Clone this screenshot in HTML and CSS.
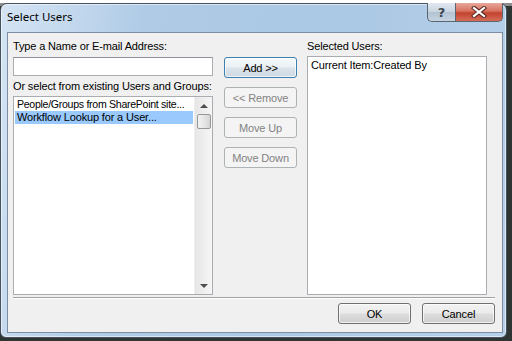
FILE: index.html
```html
<!DOCTYPE html>
<html lang="en">
  <head>
    <meta charset="UTF-8" />
    <title>Select Users</title>
    <link rel="stylesheet" href="styles.css">
  </head>
  <body>
    <div class="desktop">
      <div class="window">
        <div class="titlebar">
          <span class="title">Select Users</span>
          <div class="caption-buttons">
            <span class="cap-btn help">?</span>
            <span class="cap-btn close">
              <svg width="16" height="12" viewBox="0 0 16 12">
                <path d="M3 2 L13 10 M13 2 L3 10" stroke="#5a2a22" stroke-width="4.2" stroke-linecap="square" />
                <path d="M3 2 L13 10 M13 2 L3 10" stroke="#ffffff" stroke-width="2.2" stroke-linecap="square" />
              </svg>
            </span>
          </div>
        </div>

        <div class="client">
          <div class="columns">
            <div class="col left-col">
              <label>Type a Name or E-mail Address:</label>
              <input class="name-input" type="text" />
              <label class="second-label">Or select from existing Users and Groups:</label>
              <div class="listbox source-list">
                <ul class="items">
                  <li class="tight">People/Groups from SharePoint site...</li>
                  <li class="selected">Workflow Lookup for a User...</li>
                </ul>
                <div class="scrollbar">
                  <span class="arrow"><span class="tri up"></span></span>
                  <span class="thumb"></span>
                  <span class="track"></span>
                  <span class="arrow"><span class="tri down"></span></span>
                </div>
              </div>
            </div>

            <div class="col middle-col">
              <button class="btn default">Add &gt;&gt;</button>
              <button class="btn" disabled>&lt;&lt; Remove</button>
              <button class="btn" disabled>Move Up</button>
              <button class="btn" disabled>Move Down</button>
            </div>

            <div class="col right-col">
              <label>Selected Users:</label>
              <div class="listbox target-list">
                <ul class="items">
                  <li>Current Item:Created By</li>
                </ul>
              </div>
            </div>
          </div>

          <div class="separator"></div>

          <div class="footer">
            <button class="btn">OK</button>
            <button class="btn">Cancel</button>
          </div>
        </div>
      </div>
    </div>
  </body>
</html>
```

FILE: styles.css
```css
body {
  margin: 0;
  background-color: #ffffff;
  font-family: "Liberation Sans", Arial, sans-serif;
  font-size: 11px;
  letter-spacing: -0.15px;
  color: #000000;
}
.desktop {
  width: 512px;
  height: 338px;
  background: linear-gradient(to bottom, #8d8d8d 0, #8d8d8d 3px, #2f3532 3px);
}
.window {
  box-sizing: border-box;
  width: 507px;
  height: 335px;
  margin-top: 3px;
  border: 1px solid #46525e;
  border-radius: 7px 7px 6px 6px;
  background: linear-gradient(100deg, #d4e4f4 0%, #c2d7ed 14%, #afcbe6 26%, #abc8e4 60%, #b6d0e9 100%);
  box-shadow: inset 0 0 0 1px rgba(255, 255, 255, 0.55);
}
.titlebar {
  display: flex;
  align-items: flex-start;
  height: 28px;
}
.title {
  font-family: "Noto Sans", "Open Sans", sans-serif;
  font-size: 11.5px;
  letter-spacing: 0;
  line-height: 16px;
  padding: 5px 0 0 6px;
  color: #000000;
}
.caption-buttons {
  display: flex;
  margin: -1px 3px 0 auto;
}
.cap-btn {
  display: flex;
  align-items: center;
  justify-content: center;
  height: 19px;
  box-sizing: border-box;
  border: 1px solid #5c6670;
  border-top: none;
}
.help {
  width: 28px;
  border-radius: 0 0 0 5px;
  border-right: none;
  background: linear-gradient(to bottom, #e1e9f1 0%, #c9d5e1 48%, #b3c3d3 52%, #c6d4e2 100%);
  font-family: "DejaVu Sans", sans-serif;
  font-weight: bold;
  font-size: 13px;
  color: #3c4650;
}
.close {
  width: 48px;
  border-radius: 0 0 5px 0;
  background: linear-gradient(to bottom, #e8a89c 0%, #d7715f 45%, #c2432d 55%, #d66d58 100%);
}
.client {
  box-sizing: border-box;
  width: 496px;
  height: 301px;
  margin-left: 6px;
  border: 1px solid #7d8ea2;
  background-color: #f0f0f0;
  padding: 7px 0 0 5px;
}
.columns {
  display: flex;
  align-items: flex-start;
}
.col {
  display: flex;
  flex-direction: column;
}
label {
  display: block;
  line-height: 13px;
  white-space: nowrap;
}
.left-col {
  width: 200px;
}
.name-input {
  box-sizing: border-box;
  width: 200px;
  height: 19px;
  margin: 4px 0 0 0;
  border: 1px solid #abadb3;
  border-top-color: #8e9299;
  background-color: #ffffff;
}
.second-label {
  margin-top: 4px;
}
.listbox {
  box-sizing: border-box;
  margin-top: 3px;
  border: 1px solid #a9adb2;
  background-color: #ffffff;
  display: flex;
}
.source-list {
  width: 200px;
  height: 199px;
}
.target-list {
  width: 180px;
  height: 239px;
}
.items {
  list-style: none;
  margin: 0;
  padding: 1px 1px 0 1px;
  flex: 1;
  min-width: 0;
}
.items li {
  line-height: 13px;
  padding-left: 2px;
  white-space: nowrap;
  overflow: hidden;
}
.items li.tight {
  font-size: 10.6px;
  letter-spacing: -0.3px;
}
.items li.selected {
  background-color: #99c9fd;
}
.target-list .items {
  padding-top: 2px;
}
.scrollbar {
  width: 17px;
  display: flex;
  flex-direction: column;
  align-items: center;
  background: linear-gradient(to right, #e6e6e6, #f6f6f6);
  border-left: 1px solid #eeeeee;
}
.arrow {
  width: 17px;
  height: 17px;
  display: flex;
  align-items: center;
  justify-content: center;
}
.tri {
  width: 0;
  height: 0;
  border-left: 4px solid transparent;
  border-right: 4px solid transparent;
}
.tri.up {
  border-bottom: 4px solid #4d4d4d;
}
.tri.down {
  border-top: 4px solid #4d4d4d;
}
.thumb {
  box-sizing: border-box;
  width: 14px;
  height: 15px;
  border: 1px solid #979797;
  border-radius: 2px;
  background: linear-gradient(to right, #f3f3f3, #e6e6e6 50%, #d4d4d4);
}
.track {
  flex: 1;
}
.middle-col {
  margin: 17px 0 0 11px;
  gap: 9px;
}
.right-col {
  margin-left: 10px;
}
.btn {
  box-sizing: border-box;
  width: 73px;
  height: 21px;
  padding: 0;
  border: 1px solid #707070;
  border-radius: 3px;
  background: linear-gradient(to bottom, #f2f2f2 0%, #ebebeb 48%, #dddddd 52%, #cfcfcf 100%);
  box-shadow: inset 0 0 0 1px rgba(255, 255, 255, 0.7);
  font-family: "Liberation Sans", Arial, sans-serif;
  font-size: 11px;
  letter-spacing: -0.15px;
  color: #000000;
}
.btn.default {
  border-color: #3c7fb1;
  background: linear-gradient(to bottom, #f5f9fc 0%, #eaf0f5 48%, #dbe3ea 52%, #d0dae3 100%);
}
.btn:disabled {
  border-color: #adb2b5;
  background: #f4f4f4;
  box-shadow: none;
  color: #838383;
}
.separator {
  width: 482px;
  height: 1px;
  margin-top: 2px;
  border-top: 1px solid #a0a0a0;
  background-color: #ffffff;
}
.footer {
  display: flex;
  justify-content: flex-end;
  gap: 11px;
  width: 482px;
  margin-top: 4px;
}
```
